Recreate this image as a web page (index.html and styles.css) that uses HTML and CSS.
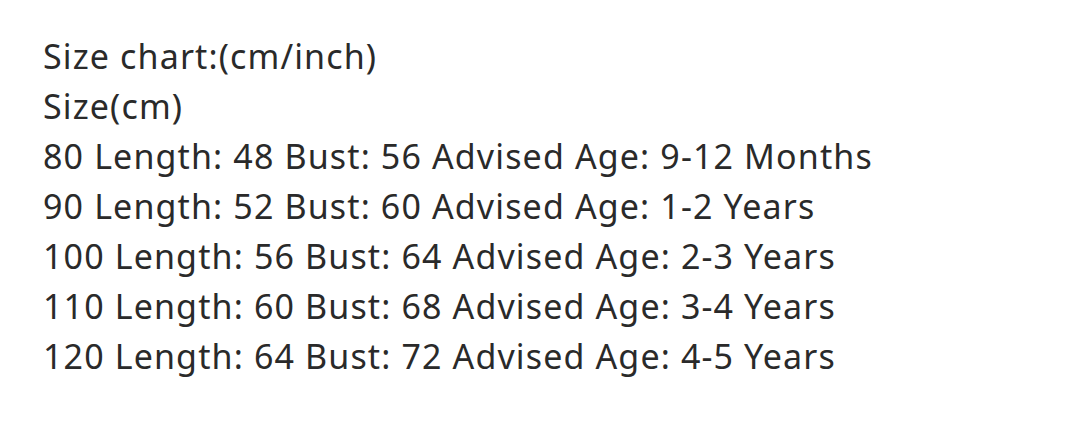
FILE: index.html
```html
<!DOCTYPE html>
<html>
<head>
<meta charset="utf-8">
<link rel="stylesheet" href="styles.css">
</head>
<body>
<div class="chart">
<p class="line">Size chart:(cm/inch)</p>
<p class="line">Size(cm)</p>
<p class="line">80 Length: 48 Bust: 56 Advised Age: 9-12 Months</p>
<p class="line">90 Length: 52 Bust: 60 Advised Age: 1-2 Years</p>
<p class="line">100 Length: 56 Bust: 64 Advised Age: 2-3 Years</p>
<p class="line">110 Length: 60 Bust: 68 Advised Age: 3-4 Years</p>
<p class="line">120 Length: 64 Bust: 72 Advised Age: 4-5 Years</p>
</div>
</body>
</html>
```

FILE: styles.css
```css
html, body {
  margin: 0;
  padding: 0;
  background: #ffffff;
}
.chart {
  padding: 31px 0 0 43px;
  font-family: "Noto Sans", "Open Sans", sans-serif;
  font-size: 34px;
  line-height: 50px;
  letter-spacing: 1.13px;
  color: #2a2a2a;
}
.line {
  margin: 0;
  white-space: nowrap;
}
```
